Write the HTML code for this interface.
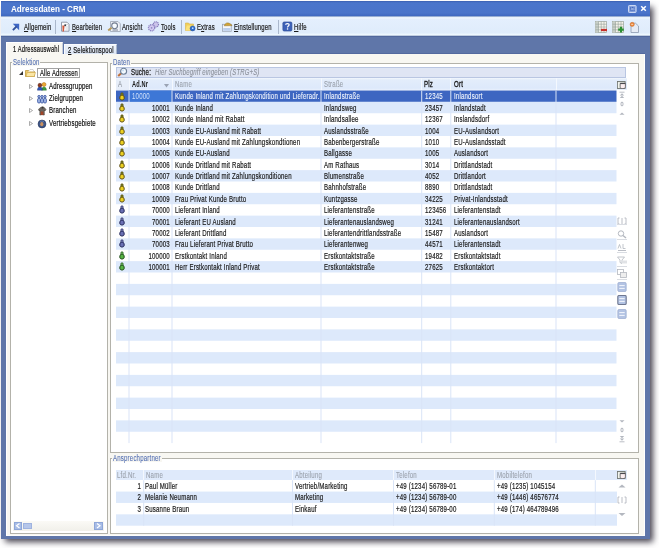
<!DOCTYPE html>
<html><head><meta charset="utf-8"><title>Adressdaten - CRM</title>
<style>
*{margin:0;padding:0;box-sizing:border-box}
html,body{width:659px;height:548px;overflow:hidden;background:#fff}
body{position:relative;font-family:"Liberation Sans",sans-serif;font-size:8px;color:#1c1c1c}
.a{position:absolute}
.t{position:absolute;white-space:nowrap;line-height:10px;height:10px;font-size:8.5px;transform-origin:0 50%;letter-spacing:.25px;-webkit-text-stroke:.2px currentColor}
u{text-decoration:underline;text-decoration-thickness:.6px;text-underline-offset:.5px}
</style></head><body>
<div class="a" style="left:5px;top:7px;width:647.8px;height:534.5px;background:rgba(25,20,35,.8);filter:blur(3px)"></div>
<div class="a" style="left:1px;top:1px;width:649px;height:538px;background:#5f76a9"></div>
<div class="a" style="left:1px;top:1px;width:649px;height:15px;background:linear-gradient(#3a5fb0,#4a75cb 12%,#4a74ca 80%,#3f68bf)"></div>
<div class="t" style="left:10.5px;top:4.1px;transform:scaleX(0.95);color:#fff;font-weight:bold;-webkit-text-stroke:0;letter-spacing:0">Adressdaten - CRM</div>
<svg class="a" style="left:628px;top:5px" width="9" height="8" viewBox="0 0 9 8"><rect x="0.5" y="0.5" width="7.6" height="7" rx=".8" fill="#8ea8e0" stroke="#d5e0f7" stroke-width=".9"/><rect x="2.4" y="2.4" width="3.8" height="3.3" fill="none" stroke="#2f57b0" stroke-width=".9" stroke-dasharray="1 .6"/></svg>
<svg class="a" style="left:640px;top:5px" width="7" height="7" viewBox="0 0 7 7"><path d="M1.2 1.2L5.8 5.8M5.8 1.2L1.2 5.8" stroke="#fff" stroke-width="1.5"/></svg>
<div class="a" style="left:1px;top:16px;width:649px;height:20px;background:linear-gradient(#6f8cc0,#f2f9ff 8%,#e4effd 16%,#dfecfb 84%,#eef8ff 93%,#a7b5cf)"></div>
<div class="a" style="left:1px;top:36px;width:649px;height:1px;background:#50679c"></div>
<div class="a" style="left:6px;top:53px;width:639px;height:1px;background:#53699f"></div>
<svg class="a" style="left:9px;top:19px" width="16" height="16" viewBox="0 0 16 16"><path d="M12.8 23.8L19.2 23.8L19.1 30.2z" transform="translate(-9,-19)" fill="#3d66c4"/><path d="M12.9 30.1L16.6 26.4" transform="translate(-9,-19)" stroke="#2f4f9a" stroke-width="1.9"/></svg>
<div class="t" style="left:23.5px;top:22.4px;transform:scaleX(0.694);-webkit-text-stroke:.22px currentColor"><u>A</u>llgemein</div>
<div class="a" style="left:55px;top:19.5px;width:1px;height:14px;background:#aab8cc"></div>
<svg class="a" style="left:58px;top:19px" width="16" height="16" viewBox="0 0 16 16"><g transform="translate(-58,-19)"><path d="M61.5 22.2h5.5l2 2v7h-7.5z" fill="#fbfcfe" stroke="#7d8798" stroke-width=".8"/><path d="M66 24.5h2M65.5 27h2.5M65.5 29h2.5" stroke="#b8c0cc" stroke-width=".6"/><path d="M62.3 25.5L64.6 25.5L63.9 31.6L62.6 31.6z" fill="#d35a3e"/><circle cx="65.2" cy="25.2" r="1" fill="#3a3f48"/></g></svg>
<div class="t" style="left:71.8px;top:22.4px;transform:scaleX(0.694);-webkit-text-stroke:.22px currentColor"><u>B</u>earbeiten</div>
<svg class="a" style="left:106px;top:19px" width="16" height="16" viewBox="0 0 16 16"><g transform="translate(-106,-19)"><path d="M110.5 21.5h7.5l2.3 2.3v7.7h-9.8z" fill="#eef1f7" stroke="#9aa3b3" stroke-width=".8"/><circle cx="114.6" cy="25.8" r="2.9" fill="#f6fbff" stroke="#727d90" stroke-width="1.1"/><path d="M108.2 30.6L111.6 27.8" stroke="#b79a5a" stroke-width="1.9"/><path d="M112.5 30h5.5" stroke="#6f7a8c" stroke-width=".9"/></g></svg>
<div class="t" style="left:121.7px;top:22.4px;transform:scaleX(0.694);-webkit-text-stroke:.22px currentColor">An<u>s</u>icht</div>
<svg class="a" style="left:146px;top:19px" width="16" height="16" viewBox="0 0 16 16"><g transform="translate(-146,-19)"><circle cx="155.9" cy="24.4" r="2.6" fill="#cbc4ea" stroke="#8278b8" stroke-width="1.2" stroke-dasharray="1 .7"/><circle cx="151.6" cy="27.8" r="3.1" fill="#d3ccf0" stroke="#8a80c0" stroke-width="1.3" stroke-dasharray="1.1 .7"/><circle cx="151.6" cy="27.8" r=".9" fill="#9088c4"/></g></svg>
<div class="t" style="left:160.7px;top:22.4px;transform:scaleX(0.694);-webkit-text-stroke:.22px currentColor"><u>T</u>ools</div>
<div class="a" style="left:181px;top:19.5px;width:1px;height:14px;background:#aab8cc"></div>
<svg class="a" style="left:183px;top:19px" width="16" height="16" viewBox="0 0 16 16"><g transform="translate(-183,-19)"><path d="M185.5 23h3l1 1h4v6.5h-8z" fill="#f0cf5a" stroke="#d9b24a" stroke-width=".6"/><path d="M185.6 30.5l1.2-5h7.4l-1 5z" fill="#fbe27a"/><circle cx="192.6" cy="28.4" r="2.5" fill="#2a68cc" stroke="#1d4f9e" stroke-width=".5"/><circle cx="192.7" cy="28.2" r=".9" fill="#bfe0ff"/></g></svg>
<div class="t" style="left:197.4px;top:22.4px;transform:scaleX(0.694);-webkit-text-stroke:.22px currentColor">E<u>x</u>tras</div>
<svg class="a" style="left:220px;top:19px" width="16" height="16" viewBox="0 0 16 16"><g transform="translate(-220,-19)"><rect x="222.4" y="24.3" width="8.8" height="7" fill="#f5f7fb" stroke="#9aa4b4" stroke-width=".8"/><rect x="223.2" y="28" width="7.2" height="2.8" fill="#bcd0ee"/><path d="M224.2 25.8C225.5 22.5 228 21.8 231.5 24.8L232 25.6z" fill="#d2a536" stroke="#8f6a1a" stroke-width=".5"/></g></svg>
<div class="t" style="left:234px;top:22.4px;transform:scaleX(0.694);-webkit-text-stroke:.22px currentColor"><u>E</u>instellungen</div>
<div class="a" style="left:277.5px;top:19.5px;width:1px;height:14px;background:#aab8cc"></div>
<svg class="a" style="left:280px;top:19px" width="16" height="16" viewBox="0 0 16 16"><g transform="translate(-280,-19)"><rect x="282.9" y="22" width="9" height="9" rx="1.2" fill="#3d62b8" stroke="#2c4d9a" stroke-width=".7"/><path d="M285.6 24.8c0-1.6 3.6-1.6 3.6 0c0 1.2-1.7 1.3-1.7 2.6" fill="none" stroke="#fff" stroke-width="1.2"/><rect x="286.9" y="28.3" width="1.3" height="1.3" fill="#fff"/></g></svg>
<div class="t" style="left:293.6px;top:22.4px;transform:scaleX(0.694);-webkit-text-stroke:.22px currentColor"><u>H</u>ilfe</div>
<svg class="a" style="left:595px;top:21.2px" width="12" height="12" viewBox="0 0 12 12"><rect x="0.5" y="0.5" width="11" height="11" fill="#f4f3ea" stroke="#9aa39a" stroke-width=".7"/><rect x="0.5" y="0.5" width="3" height="11" fill="#c8cfc8"/><path d="M0.5 3.2h11M0.5 6h11M0.5 8.8h11M3.5 0.5v11M6.2 0.5v11M9 0.5v11" stroke="#8f9a92" stroke-width=".55"/><path d="M6 9h6" stroke="#c8302a" stroke-width="2.2"/></svg>
<svg class="a" style="left:612px;top:21.2px" width="12" height="12" viewBox="0 0 12 12"><rect x="0.5" y="0.5" width="11" height="11" fill="#f4f3ea" stroke="#9aa39a" stroke-width=".7"/><rect x="0.5" y="0.5" width="3" height="11" fill="#c8cfc8"/><path d="M0.5 3.2h11M0.5 6h11M0.5 8.8h11M3.5 0.5v11M6.2 0.5v11M9 0.5v11" stroke="#8f9a92" stroke-width=".55"/><path d="M6.2 8.6h5.6M9 5.8v5.6" stroke="#2a8f33" stroke-width="2.2"/></svg>
<svg class="a" style="left:629px;top:21px" width="11" height="12" viewBox="0 0 11 12"><path d="M2 2.2h4.5l3 2.8v6.5h-7.5z" fill="#e6ecf6" stroke="#8d9ab0" stroke-width=".8"/><circle cx="3.2" cy="3.4" r="2.1" fill="#ee8a3c" stroke="#c65a1a" stroke-width=".4"/><path d="M2.2 3.4h2" stroke="#fff" stroke-width=".6"/></svg>
<div class="a" style="left:6px;top:42px;width:57px;height:13px;background:#f8f7f2;border-top:1px solid #fff;border-left:1px solid #fff;border-right:1px solid #c9cfd8"></div>
<div class="a" style="left:63.5px;top:44px;width:53.5px;height:10px;background:linear-gradient(#f0f5fc,#dce6f6);border-top:1px solid #fafcff;border-left:1px solid #fafcff;border-right:1px solid #a9b6cc"></div>
<div class="a" style="left:6px;top:54px;width:639px;height:482px;background:#f8f7f2;border-left:1px solid #fff;border-right:1px solid #fff;border-bottom:1px solid #fdfdfb"></div>
<div class="t" style="left:12.5px;top:43.6px;transform:scaleX(0.678);color:#111">1 Adressauswahl</div>
<div class="t" style="left:67.6px;top:44.5px;transform:scaleX(0.688);color:#111"><u>2</u> Selektionspool</div>
<div class="a" style="left:10px;top:62px;width:98px;height:471.5px;background:#fff;border:1px solid #b3b2aa"></div>
<div class="a" style="left:12px;top:58px;width:28px;height:8px;background:#f8f7f2"></div>
<div class="t" style="left:13px;top:56.9px;transform:scaleX(0.717);color:#5570b2;-webkit-text-stroke:.1px currentColor">Selektion</div>
<svg class="a" style="left:18.7px;top:71.2px" width="4" height="4" viewBox="0 0 4 4"><path d="M4 0V4H0z" fill="#333"/></svg>
<svg class="a" style="left:25px;top:68.5px" width="11" height="8" viewBox="0 0 11 8"><path d="M0.5 1.5h3.5l1 1h4.5v5h-9z" fill="#eec867" stroke="#bf9a3c" stroke-width=".8"/><path d="M1 7.5l1.3-4h8.2l-1.3 4z" fill="#fbe6a4" stroke="#c9a44a" stroke-width=".6"/><path d="M3 2.5l2-2h3l1 2" fill="#fff" stroke="#aaa" stroke-width=".5"/></svg>
<div class="a" style="left:37.3px;top:68px;width:42.5px;height:9.5px;border:1px solid #a3a3a3;background:#fff"></div>
<div class="t" style="left:39.5px;top:67.7px;transform:scaleX(0.688);color:#111">Alle Adressen</div>
<svg class="a" style="left:28.5px;top:83.6px" width="4" height="5" viewBox="0 0 4 5"><path d="M0.5 0.5L3.5 2.5L0.5 4.5z" fill="none" stroke="#888" stroke-width=".7"/></svg>
<svg class="a" style="left:36.5px;top:81.3px" width="10" height="10" viewBox="0 0 10 10"><path d="M4.6 9.2c0-4.4 4.8-4.4 4.8 0z" fill="#3b9b3c" stroke="#2a6a2a" stroke-width=".4"/><circle cx="7" cy="3.5" r="2" fill="#eeaa33" stroke="#a86a10" stroke-width=".5"/><path d="M0.4 9.2c0-4.6 5-4.6 5 0z" fill="#3458b8" stroke="#223d80" stroke-width=".4"/><circle cx="2.9" cy="4.2" r="1.9" fill="#8a3c22" stroke="#5a2010" stroke-width=".5"/></svg>
<div class="t" style="left:49px;top:80.7px;transform:scaleX(0.717);color:#111">Adressgruppen</div>
<svg class="a" style="left:28.5px;top:95.89999999999999px" width="4" height="5" viewBox="0 0 4 5"><path d="M0.5 0.5L3.5 2.5L0.5 4.5z" fill="none" stroke="#888" stroke-width=".7"/></svg>
<svg class="a" style="left:36.5px;top:93.6px" width="10" height="10" viewBox="0 0 10 10"><g fill="#9fb4e4" stroke="#34519e" stroke-width=".8"><circle cx="2" cy="2.6" r="1.2"/><circle cx="5" cy="2.6" r="1.2"/><circle cx="8" cy="2.6" r="1.2"/><rect x="0.6" y="4.4" width="2.8" height="4.6" rx="1.2"/><rect x="3.6" y="4.4" width="2.8" height="4.6" rx="1.2"/><rect x="6.6" y="4.4" width="2.8" height="4.6" rx="1.2"/></g></svg>
<div class="t" style="left:49px;top:93.0px;transform:scaleX(0.717);color:#111">Zielgruppen</div>
<svg class="a" style="left:28.5px;top:108.3px" width="4" height="5" viewBox="0 0 4 5"><path d="M0.5 0.5L3.5 2.5L0.5 4.5z" fill="none" stroke="#888" stroke-width=".7"/></svg>
<svg class="a" style="left:36.5px;top:106.0px" width="10" height="10" viewBox="0 0 10 10"><path d="M1.5 3.2L4 1.2h3l2 2.2L8 5L7.3 4.2V9H5.5L5 6L4.5 9H2.8V4.2L2.2 5z" fill="#6a6560" stroke="#3a3530" stroke-width=".5"/><path d="M4.3 5.5v3.5M5.8 5.5v3.5" stroke="#b0401e" stroke-width="1.1"/><circle cx="5.5" cy="1.6" r="1" fill="#3a3530"/></svg>
<div class="t" style="left:49px;top:105.4px;transform:scaleX(0.717);color:#111">Branchen</div>
<svg class="a" style="left:28.5px;top:120.8px" width="4" height="5" viewBox="0 0 4 5"><path d="M0.5 0.5L3.5 2.5L0.5 4.5z" fill="none" stroke="#888" stroke-width=".7"/></svg>
<svg class="a" style="left:36.5px;top:118.5px" width="10" height="10" viewBox="0 0 10 10"><circle cx="5" cy="5" r="3.9" fill="#3f5788" stroke="#24335a" stroke-width=".7"/><ellipse cx="4.8" cy="5.2" rx="1.6" ry="2.1" fill="#c89060"/><path d="M3 2.5c1-.8 3-.8 4 .2" stroke="#8aa0d0" stroke-width=".5" fill="none"/></svg>
<div class="t" style="left:49px;top:117.9px;transform:scaleX(0.717);color:#111">Vertriebsgebiete</div>
<div class="a" style="left:13px;top:520.5px;width:91px;height:10px;background:linear-gradient(#fbfaf6,#f1f0ea)"></div>
<div class="a" style="left:14px;top:522px;width:8px;height:7.5px;background:#a8bde6;border:1px solid #8ea6d8"></div>
<svg class="a" style="left:14px;top:522px" width="8" height="7.5" viewBox="0 0 8 7.5"><path d="M5.5 1.5L2.5 3.8L5.5 6" fill="none" stroke="#fff" stroke-width="1.2"/></svg>
<div class="a" style="left:23px;top:522.5px;width:8.5px;height:6.5px;background:#b5c6ea;border:1px solid #9fb3df"></div>
<div class="a" style="left:94px;top:522px;width:8.5px;height:7.5px;background:#a8bde6;border:1px solid #8ea6d8"></div>
<svg class="a" style="left:94px;top:522px" width="8.5" height="7.5" viewBox="0 0 8.5 7.5"><path d="M3 1.5L6 3.8L3 6" fill="none" stroke="#fff" stroke-width="1.2"/></svg>
<div class="a" style="left:110.4px;top:63px;width:528.6px;height:389.6px;background:#fff;border:1px solid #b3b2aa"></div>
<div class="a" style="left:112px;top:58px;width:19px;height:8px;background:#f8f7f2"></div>
<div class="t" style="left:113px;top:57.1px;transform:scaleX(0.717);color:#5570b2;-webkit-text-stroke:.1px currentColor">Daten</div>
<div class="a" style="left:116px;top:66.6px;width:510px;height:11px;background:#dfe5f4;border:1px solid #b9c6e2"></div>
<svg class="a" style="left:116.5px;top:67.2px" width="11" height="10" viewBox="0 0 11 10"><path d="M1.2 9L4.2 6.2" stroke="#c0703a" stroke-width="2"/><circle cx="6.6" cy="4.3" r="3" fill="#f4faff" stroke="#6d7f96" stroke-width="1.1"/><circle cx="6" cy="3.6" r="1" fill="#c8e0f4"/></svg>
<div class="t" style="left:130.5px;top:67.1px;transform:scaleX(0.717);color:#222;-webkit-text-stroke:.3px currentColor">Suche:</div>
<div class="t" style="left:155px;top:67.1px;transform:scaleX(0.701);color:#8a8f99;font-style:italic;-webkit-text-stroke:.1px currentColor">Hier Suchbegriff eingeben (STRG+S)</div>
<div class="a" style="left:116px;top:78.2px;width:510.5px;height:12.3px;background:linear-gradient(#f3f7fd,#e3edfb 15%,#dde9fb 85%,#e9f0fc)"></div>
<div class="a" style="left:116px;top:78.2px;width:12.5px;height:12.3px;background:linear-gradient(#f3f7fd,#e8eff9 15%,#e6edf9)"></div>
<div class="a" style="left:128.5px;top:78.2px;width:1px;height:12.3px;background:#f4f8fe"></div>
<div class="a" style="left:171.5px;top:78.2px;width:1px;height:12.3px;background:#f4f8fe"></div>
<div class="a" style="left:320.5px;top:78.2px;width:1px;height:12.3px;background:#f4f8fe"></div>
<div class="a" style="left:421.2px;top:78.2px;width:1px;height:12.3px;background:#f4f8fe"></div>
<div class="a" style="left:450.3px;top:78.2px;width:1px;height:12.3px;background:#f4f8fe"></div>
<div class="a" style="left:555.5px;top:78.2px;width:1px;height:12.3px;background:#f4f8fe"></div>
<div class="t" style="left:117.8px;top:79.4px;transform:scaleX(0.717);color:#959ca6;-webkit-text-stroke:.1px currentColor">A</div>
<div class="t" style="left:132px;top:79.4px;transform:scaleX(0.66);color:#1a1a1a;font-weight:bold;-webkit-text-stroke:0">Ad.Nr</div>
<svg class="a" style="left:163.5px;top:83.5px" width="5" height="4" viewBox="0 0 5 4"><path d="M0 0h5l-2.5 3.5z" fill="#9aa3b3"/></svg>
<div class="t" style="left:175px;top:79.4px;transform:scaleX(0.717);color:#9aa1ab;-webkit-text-stroke:.1px currentColor">Name</div>
<div class="t" style="left:324px;top:79.4px;transform:scaleX(0.717);color:#9aa1ab;-webkit-text-stroke:.1px currentColor">Straße</div>
<div class="t" style="left:424.3px;top:79.4px;transform:scaleX(0.717);color:#1a1a1a;-webkit-text-stroke:.35px currentColor">Plz</div>
<div class="t" style="left:453.5px;top:79.4px;transform:scaleX(0.717);color:#1a1a1a;-webkit-text-stroke:.35px currentColor">Ort</div>
<svg class="a" style="left:617px;top:80.8px" width="9" height="8" viewBox="0 0 9 8"><rect x="0.5" y="0.5" width="7.6" height="7" fill="#e4e8e0" stroke="#6f7470" stroke-width=".9"/><path d="M1.4 1.4v5.4" stroke="#f4f6f0" stroke-width="1"/><path d="M3.2 2.6h5.2v3.2c0 1.2-.8 1.8-2.6 1.8S3.2 7 3.2 5.8z" fill="#fbeef0" stroke="#5a5a60" stroke-width=".8"/><path d="M3.2 2.4h5.2" stroke="#4a4a50" stroke-width="1.2"/></svg>
<svg class="a" style="left:0;top:0" width="659" height="548">
<rect x="116" y="90.5" width="500.5" height="11.375" fill="#3d66c1"/>
<rect x="129" y="90.5" width="42.5" height="11.375" fill="#3d77d6"/>
<rect x="116" y="101.875" width="500.5" height="11.375" fill="#dde9fb"/>
<rect x="116" y="124.625" width="500.5" height="11.375" fill="#dde9fb"/>
<rect x="116" y="147.375" width="500.5" height="11.375" fill="#dde9fb"/>
<rect x="116" y="170.125" width="500.5" height="11.375" fill="#dde9fb"/>
<rect x="116" y="192.875" width="500.5" height="11.375" fill="#dde9fb"/>
<rect x="116" y="215.625" width="500.5" height="11.375" fill="#dde9fb"/>
<rect x="116" y="238.375" width="500.5" height="11.375" fill="#dde9fb"/>
<rect x="116" y="261.125" width="500.5" height="11.375" fill="#dde9fb"/>
<rect x="116" y="283.875" width="500.5" height="11.375" fill="#dde9fb"/>
<rect x="116" y="306.625" width="500.5" height="11.375" fill="#dde9fb"/>
<rect x="116" y="329.375" width="500.5" height="11.375" fill="#dde9fb"/>
<rect x="116" y="352.125" width="500.5" height="11.375" fill="#dde9fb"/>
<rect x="116" y="374.875" width="500.5" height="11.375" fill="#dde9fb"/>
<rect x="116" y="397.625" width="500.5" height="11.375" fill="#dde9fb"/>
<rect x="116" y="420.375" width="500.5" height="11.375" fill="#dde9fb"/>
<rect x="128.5" y="90.5" width="1" height="352.625" fill="#d9e4f7"/>
<rect x="171.5" y="90.5" width="1" height="352.625" fill="#d9e4f7"/>
<rect x="320.5" y="90.5" width="1" height="352.625" fill="#d9e4f7"/>
<rect x="421.2" y="90.5" width="1" height="352.625" fill="#d9e4f7"/>
<rect x="450.3" y="90.5" width="1" height="352.625" fill="#d9e4f7"/>
<rect x="555.5" y="90.5" width="1" height="352.625" fill="#d9e4f7"/>
</svg>
<svg class="a" style="left:118.6px;top:91.5px" width="6" height="9" viewBox="0 0 6 9"><path d="M3 2.8C1.5 2.8 0.8 4.6 0.8 6C0.8 7.3 1.5 8 3 8C4.5 8 5.2 7.3 5.2 6C5.2 4.6 4.5 2.8 3 2.8z" fill="#ecd020" stroke="#5a4a10" stroke-width="1"/><circle cx="3" cy="2.1" r="1.25" fill="#7a8a2a" stroke="#5a4a10" stroke-width=".7"/></svg>
<div class="t" style="left:132px;top:91.39px;transform:scaleX(0.717);color:#cfe0fb;-webkit-text-stroke:0">10000</div>
<div class="t" style="left:175px;top:91.39px;transform:scaleX(0.717);color:#f2f6fd;-webkit-text-stroke:.1px currentColor">Kunde Inland mit Zahlungskondition und Lieferadr.</div>
<div class="t" style="left:324px;top:91.39px;transform:scaleX(0.717);color:#f2f6fd;-webkit-text-stroke:.1px currentColor">Inlandstraße</div>
<div class="t" style="left:424.5px;top:91.39px;transform:scaleX(0.717);color:#f2f6fd;-webkit-text-stroke:.1px currentColor">12345</div>
<div class="t" style="left:453.5px;top:91.39px;transform:scaleX(0.717);color:#f2f6fd;-webkit-text-stroke:.1px currentColor">Inlandsort</div>
<svg class="a" style="left:118.6px;top:102.88px" width="6" height="9" viewBox="0 0 6 9"><path d="M3 2.8C1.5 2.8 0.8 4.6 0.8 6C0.8 7.3 1.5 8 3 8C4.5 8 5.2 7.3 5.2 6C5.2 4.6 4.5 2.8 3 2.8z" fill="#ecd020" stroke="#5a4a10" stroke-width="1"/><circle cx="3" cy="2.1" r="1.25" fill="#7a8a2a" stroke="#5a4a10" stroke-width=".7"/></svg>
<div class="t" style="right:489.5px;top:102.76px;transform-origin:100% 50%;transform:scaleX(0.717);color:#1c1c1c">10001</div>
<div class="t" style="left:175px;top:102.76px;transform:scaleX(0.717);color:#1c1c1c">Kunde Inland</div>
<div class="t" style="left:324px;top:102.76px;transform:scaleX(0.717);color:#1c1c1c">Inlandsweg</div>
<div class="t" style="left:424.5px;top:102.76px;transform:scaleX(0.717);color:#1c1c1c">23457</div>
<div class="t" style="left:453.5px;top:102.76px;transform:scaleX(0.717);color:#1c1c1c">Inlandstadt</div>
<svg class="a" style="left:118.6px;top:114.25px" width="6" height="9" viewBox="0 0 6 9"><path d="M3 2.8C1.5 2.8 0.8 4.6 0.8 6C0.8 7.3 1.5 8 3 8C4.5 8 5.2 7.3 5.2 6C5.2 4.6 4.5 2.8 3 2.8z" fill="#ecd020" stroke="#5a4a10" stroke-width="1"/><circle cx="3" cy="2.1" r="1.25" fill="#7a8a2a" stroke="#5a4a10" stroke-width=".7"/></svg>
<div class="t" style="right:489.5px;top:114.14px;transform-origin:100% 50%;transform:scaleX(0.717);color:#1c1c1c">10002</div>
<div class="t" style="left:175px;top:114.14px;transform:scaleX(0.717);color:#1c1c1c">Kunde Inland mit Rabatt</div>
<div class="t" style="left:324px;top:114.14px;transform:scaleX(0.717);color:#1c1c1c">Inlandsallee</div>
<div class="t" style="left:424.5px;top:114.14px;transform:scaleX(0.717);color:#1c1c1c">12367</div>
<div class="t" style="left:453.5px;top:114.14px;transform:scaleX(0.717);color:#1c1c1c">Inslandsdorf</div>
<svg class="a" style="left:118.6px;top:125.62px" width="6" height="9" viewBox="0 0 6 9"><path d="M3 2.8C1.5 2.8 0.8 4.6 0.8 6C0.8 7.3 1.5 8 3 8C4.5 8 5.2 7.3 5.2 6C5.2 4.6 4.5 2.8 3 2.8z" fill="#ecd020" stroke="#5a4a10" stroke-width="1"/><circle cx="3" cy="2.1" r="1.25" fill="#7a8a2a" stroke="#5a4a10" stroke-width=".7"/></svg>
<div class="t" style="right:489.5px;top:125.51px;transform-origin:100% 50%;transform:scaleX(0.717);color:#1c1c1c">10003</div>
<div class="t" style="left:175px;top:125.51px;transform:scaleX(0.717);color:#1c1c1c">Kunde EU-Ausland mit Rabatt</div>
<div class="t" style="left:324px;top:125.51px;transform:scaleX(0.717);color:#1c1c1c">Auslandsstraße</div>
<div class="t" style="left:424.5px;top:125.51px;transform:scaleX(0.717);color:#1c1c1c">1004</div>
<div class="t" style="left:453.5px;top:125.51px;transform:scaleX(0.717);color:#1c1c1c">EU-Auslandsort</div>
<svg class="a" style="left:118.6px;top:137.0px" width="6" height="9" viewBox="0 0 6 9"><path d="M3 2.8C1.5 2.8 0.8 4.6 0.8 6C0.8 7.3 1.5 8 3 8C4.5 8 5.2 7.3 5.2 6C5.2 4.6 4.5 2.8 3 2.8z" fill="#ecd020" stroke="#5a4a10" stroke-width="1"/><circle cx="3" cy="2.1" r="1.25" fill="#7a8a2a" stroke="#5a4a10" stroke-width=".7"/></svg>
<div class="t" style="right:489.5px;top:136.89px;transform-origin:100% 50%;transform:scaleX(0.717);color:#1c1c1c">10004</div>
<div class="t" style="left:175px;top:136.89px;transform:scaleX(0.717);color:#1c1c1c">Kunde EU-Ausland mit Zahlungskondtionen</div>
<div class="t" style="left:324px;top:136.89px;transform:scaleX(0.717);color:#1c1c1c">Babenbergerstraße</div>
<div class="t" style="left:424.5px;top:136.89px;transform:scaleX(0.717);color:#1c1c1c">1010</div>
<div class="t" style="left:453.5px;top:136.89px;transform:scaleX(0.717);color:#1c1c1c">EU-Auslandsstadt</div>
<svg class="a" style="left:118.6px;top:148.38px" width="6" height="9" viewBox="0 0 6 9"><path d="M3 2.8C1.5 2.8 0.8 4.6 0.8 6C0.8 7.3 1.5 8 3 8C4.5 8 5.2 7.3 5.2 6C5.2 4.6 4.5 2.8 3 2.8z" fill="#ecd020" stroke="#5a4a10" stroke-width="1"/><circle cx="3" cy="2.1" r="1.25" fill="#7a8a2a" stroke="#5a4a10" stroke-width=".7"/></svg>
<div class="t" style="right:489.5px;top:148.26px;transform-origin:100% 50%;transform:scaleX(0.717);color:#1c1c1c">10005</div>
<div class="t" style="left:175px;top:148.26px;transform:scaleX(0.717);color:#1c1c1c">Kunde EU-Ausland</div>
<div class="t" style="left:324px;top:148.26px;transform:scaleX(0.717);color:#1c1c1c">Ballgasse</div>
<div class="t" style="left:424.5px;top:148.26px;transform:scaleX(0.717);color:#1c1c1c">1005</div>
<div class="t" style="left:453.5px;top:148.26px;transform:scaleX(0.717);color:#1c1c1c">Auslandsort</div>
<svg class="a" style="left:118.6px;top:159.75px" width="6" height="9" viewBox="0 0 6 9"><path d="M3 2.8C1.5 2.8 0.8 4.6 0.8 6C0.8 7.3 1.5 8 3 8C4.5 8 5.2 7.3 5.2 6C5.2 4.6 4.5 2.8 3 2.8z" fill="#ecd020" stroke="#5a4a10" stroke-width="1"/><circle cx="3" cy="2.1" r="1.25" fill="#7a8a2a" stroke="#5a4a10" stroke-width=".7"/></svg>
<div class="t" style="right:489.5px;top:159.64px;transform-origin:100% 50%;transform:scaleX(0.717);color:#1c1c1c">10006</div>
<div class="t" style="left:175px;top:159.64px;transform:scaleX(0.717);color:#1c1c1c">Kunde Drittland mit Rabatt</div>
<div class="t" style="left:324px;top:159.64px;transform:scaleX(0.717);color:#1c1c1c">Am Rathaus</div>
<div class="t" style="left:424.5px;top:159.64px;transform:scaleX(0.717);color:#1c1c1c">3014</div>
<div class="t" style="left:453.5px;top:159.64px;transform:scaleX(0.717);color:#1c1c1c">Drittlandstadt</div>
<svg class="a" style="left:118.6px;top:171.12px" width="6" height="9" viewBox="0 0 6 9"><path d="M3 2.8C1.5 2.8 0.8 4.6 0.8 6C0.8 7.3 1.5 8 3 8C4.5 8 5.2 7.3 5.2 6C5.2 4.6 4.5 2.8 3 2.8z" fill="#ecd020" stroke="#5a4a10" stroke-width="1"/><circle cx="3" cy="2.1" r="1.25" fill="#7a8a2a" stroke="#5a4a10" stroke-width=".7"/></svg>
<div class="t" style="right:489.5px;top:171.01px;transform-origin:100% 50%;transform:scaleX(0.717);color:#1c1c1c">10007</div>
<div class="t" style="left:175px;top:171.01px;transform:scaleX(0.717);color:#1c1c1c">Kunde Drittland mit Zahlungskonditionen</div>
<div class="t" style="left:324px;top:171.01px;transform:scaleX(0.717);color:#1c1c1c">Blumenstraße</div>
<div class="t" style="left:424.5px;top:171.01px;transform:scaleX(0.717);color:#1c1c1c">4052</div>
<div class="t" style="left:453.5px;top:171.01px;transform:scaleX(0.717);color:#1c1c1c">Drittlandort</div>
<svg class="a" style="left:118.6px;top:182.5px" width="6" height="9" viewBox="0 0 6 9"><path d="M3 2.8C1.5 2.8 0.8 4.6 0.8 6C0.8 7.3 1.5 8 3 8C4.5 8 5.2 7.3 5.2 6C5.2 4.6 4.5 2.8 3 2.8z" fill="#ecd020" stroke="#5a4a10" stroke-width="1"/><circle cx="3" cy="2.1" r="1.25" fill="#7a8a2a" stroke="#5a4a10" stroke-width=".7"/></svg>
<div class="t" style="right:489.5px;top:182.39px;transform-origin:100% 50%;transform:scaleX(0.717);color:#1c1c1c">10008</div>
<div class="t" style="left:175px;top:182.39px;transform:scaleX(0.717);color:#1c1c1c">Kunde Drittland</div>
<div class="t" style="left:324px;top:182.39px;transform:scaleX(0.717);color:#1c1c1c">Bahnhofstraße</div>
<div class="t" style="left:424.5px;top:182.39px;transform:scaleX(0.717);color:#1c1c1c">8890</div>
<div class="t" style="left:453.5px;top:182.39px;transform:scaleX(0.717);color:#1c1c1c">Drittlandstadt</div>
<svg class="a" style="left:118.6px;top:193.88px" width="6" height="9" viewBox="0 0 6 9"><path d="M3 2.8C1.5 2.8 0.8 4.6 0.8 6C0.8 7.3 1.5 8 3 8C4.5 8 5.2 7.3 5.2 6C5.2 4.6 4.5 2.8 3 2.8z" fill="#ecd020" stroke="#5a4a10" stroke-width="1"/><circle cx="3" cy="2.1" r="1.25" fill="#7a8a2a" stroke="#5a4a10" stroke-width=".7"/></svg>
<div class="t" style="right:489.5px;top:193.76px;transform-origin:100% 50%;transform:scaleX(0.717);color:#1c1c1c">10009</div>
<div class="t" style="left:175px;top:193.76px;transform:scaleX(0.717);color:#1c1c1c">Frau Privat Kunde Brutto</div>
<div class="t" style="left:324px;top:193.76px;transform:scaleX(0.717);color:#1c1c1c">Kuntzgasse</div>
<div class="t" style="left:424.5px;top:193.76px;transform:scaleX(0.717);color:#1c1c1c">34225</div>
<div class="t" style="left:453.5px;top:193.76px;transform:scaleX(0.717);color:#1c1c1c">Privat-Inlandsstadt</div>
<svg class="a" style="left:118.6px;top:205.25px" width="6" height="9" viewBox="0 0 6 9"><path d="M3 2.8C1.5 2.8 0.8 4.6 0.8 6C0.8 7.3 1.5 8 3 8C4.5 8 5.2 7.3 5.2 6C5.2 4.6 4.5 2.8 3 2.8z" fill="#6a70b4" stroke="#23275a" stroke-width="1"/><circle cx="3" cy="2.1" r="1.25" fill="#8a90c8" stroke="#23275a" stroke-width=".7"/></svg>
<div class="t" style="right:489.5px;top:205.14px;transform-origin:100% 50%;transform:scaleX(0.717);color:#1c1c1c">70000</div>
<div class="t" style="left:175px;top:205.14px;transform:scaleX(0.717);color:#1c1c1c">Lieferant Inland</div>
<div class="t" style="left:324px;top:205.14px;transform:scaleX(0.717);color:#1c1c1c">Lieferantenstraße</div>
<div class="t" style="left:424.5px;top:205.14px;transform:scaleX(0.717);color:#1c1c1c">123456</div>
<div class="t" style="left:453.5px;top:205.14px;transform:scaleX(0.717);color:#1c1c1c">Lieferantenstadt</div>
<svg class="a" style="left:118.6px;top:216.62px" width="6" height="9" viewBox="0 0 6 9"><path d="M3 2.8C1.5 2.8 0.8 4.6 0.8 6C0.8 7.3 1.5 8 3 8C4.5 8 5.2 7.3 5.2 6C5.2 4.6 4.5 2.8 3 2.8z" fill="#6a70b4" stroke="#23275a" stroke-width="1"/><circle cx="3" cy="2.1" r="1.25" fill="#8a90c8" stroke="#23275a" stroke-width=".7"/></svg>
<div class="t" style="right:489.5px;top:216.51px;transform-origin:100% 50%;transform:scaleX(0.717);color:#1c1c1c">70001</div>
<div class="t" style="left:175px;top:216.51px;transform:scaleX(0.717);color:#1c1c1c">Lieferant EU Ausland</div>
<div class="t" style="left:324px;top:216.51px;transform:scaleX(0.717);color:#1c1c1c">Lieferantenauslandsweg</div>
<div class="t" style="left:424.5px;top:216.51px;transform:scaleX(0.717);color:#1c1c1c">31241</div>
<div class="t" style="left:453.5px;top:216.51px;transform:scaleX(0.717);color:#1c1c1c">Lieferantenauslandsort</div>
<svg class="a" style="left:118.6px;top:228.0px" width="6" height="9" viewBox="0 0 6 9"><path d="M3 2.8C1.5 2.8 0.8 4.6 0.8 6C0.8 7.3 1.5 8 3 8C4.5 8 5.2 7.3 5.2 6C5.2 4.6 4.5 2.8 3 2.8z" fill="#6a70b4" stroke="#23275a" stroke-width="1"/><circle cx="3" cy="2.1" r="1.25" fill="#8a90c8" stroke="#23275a" stroke-width=".7"/></svg>
<div class="t" style="right:489.5px;top:227.89px;transform-origin:100% 50%;transform:scaleX(0.717);color:#1c1c1c">70002</div>
<div class="t" style="left:175px;top:227.89px;transform:scaleX(0.717);color:#1c1c1c">Lieferant Drittland</div>
<div class="t" style="left:324px;top:227.89px;transform:scaleX(0.717);color:#1c1c1c">Lieferantendrittlandsstraße</div>
<div class="t" style="left:424.5px;top:227.89px;transform:scaleX(0.717);color:#1c1c1c">15487</div>
<div class="t" style="left:453.5px;top:227.89px;transform:scaleX(0.717);color:#1c1c1c">Auslandsort</div>
<svg class="a" style="left:118.6px;top:239.38px" width="6" height="9" viewBox="0 0 6 9"><path d="M3 2.8C1.5 2.8 0.8 4.6 0.8 6C0.8 7.3 1.5 8 3 8C4.5 8 5.2 7.3 5.2 6C5.2 4.6 4.5 2.8 3 2.8z" fill="#6a70b4" stroke="#23275a" stroke-width="1"/><circle cx="3" cy="2.1" r="1.25" fill="#8a90c8" stroke="#23275a" stroke-width=".7"/></svg>
<div class="t" style="right:489.5px;top:239.26px;transform-origin:100% 50%;transform:scaleX(0.717);color:#1c1c1c">70003</div>
<div class="t" style="left:175px;top:239.26px;transform:scaleX(0.717);color:#1c1c1c">Frau Lieferant Privat Brutto</div>
<div class="t" style="left:324px;top:239.26px;transform:scaleX(0.717);color:#1c1c1c">Lieferantenweg</div>
<div class="t" style="left:424.5px;top:239.26px;transform:scaleX(0.717);color:#1c1c1c">44571</div>
<div class="t" style="left:453.5px;top:239.26px;transform:scaleX(0.717);color:#1c1c1c">Lieferantenstadt</div>
<svg class="a" style="left:118.6px;top:250.75px" width="6" height="9" viewBox="0 0 6 9"><path d="M3 2.8C1.5 2.8 0.8 4.6 0.8 6C0.8 7.3 1.5 8 3 8C4.5 8 5.2 7.3 5.2 6C5.2 4.6 4.5 2.8 3 2.8z" fill="#56b444" stroke="#1e4a18" stroke-width="1"/><circle cx="3" cy="2.1" r="1.25" fill="#7acc6a" stroke="#1e4a18" stroke-width=".7"/></svg>
<div class="t" style="right:489.5px;top:250.64px;transform-origin:100% 50%;transform:scaleX(0.717);color:#1c1c1c">100000</div>
<div class="t" style="left:175px;top:250.64px;transform:scaleX(0.717);color:#1c1c1c">Erstkontakt Inland</div>
<div class="t" style="left:324px;top:250.64px;transform:scaleX(0.717);color:#1c1c1c">Erstkontaktstraße</div>
<div class="t" style="left:424.5px;top:250.64px;transform:scaleX(0.717);color:#1c1c1c">19482</div>
<div class="t" style="left:453.5px;top:250.64px;transform:scaleX(0.717);color:#1c1c1c">Erstkontaktstadt</div>
<svg class="a" style="left:118.6px;top:262.12px" width="6" height="9" viewBox="0 0 6 9"><path d="M3 2.8C1.5 2.8 0.8 4.6 0.8 6C0.8 7.3 1.5 8 3 8C4.5 8 5.2 7.3 5.2 6C5.2 4.6 4.5 2.8 3 2.8z" fill="#56b444" stroke="#1e4a18" stroke-width="1"/><circle cx="3" cy="2.1" r="1.25" fill="#7acc6a" stroke="#1e4a18" stroke-width=".7"/></svg>
<div class="t" style="right:489.5px;top:262.01px;transform-origin:100% 50%;transform:scaleX(0.717);color:#1c1c1c">100001</div>
<div class="t" style="left:175px;top:262.01px;transform:scaleX(0.717);color:#1c1c1c">Herr Erstkontakt Inland Privat</div>
<div class="t" style="left:324px;top:262.01px;transform:scaleX(0.717);color:#1c1c1c">Erstkontaktstraße</div>
<div class="t" style="left:424.5px;top:262.01px;transform:scaleX(0.717);color:#1c1c1c">27625</div>
<div class="t" style="left:453.5px;top:262.01px;transform:scaleX(0.717);color:#1c1c1c">Erstkontaktort</div>
<svg class="a" style="left:617px;top:91px" width="10" height="8" viewBox="0 0 10 8"><path d="M2.5 1.2h5" stroke="#b3b7bf" stroke-width=".9"/><path d="M2.8 4.4L5 2.2L7.2 4.4zM2.8 7L5 4.8L7.2 7z" fill="#b3b7bf"/></svg>
<svg class="a" style="left:617px;top:99.5px" width="10" height="8" viewBox="0 0 10 8"><path d="M2.8 3.6L5 1.4L7.2 3.6zM2.8 4.4L5 6.6L7.2 4.4z" fill="#b3b7bf"/></svg>
<svg class="a" style="left:617px;top:109px" width="10" height="8" viewBox="0 0 10 8"><path d="M2.5 5.8L5 3.4L7.5 5.8z" fill="#b3b7bf"/></svg>
<svg class="a" style="left:617px;top:417.5px" width="10" height="8" viewBox="0 0 10 8"><path d="M2.5 2.2L5 4.6L7.5 2.2z" fill="#b3b7bf"/></svg>
<svg class="a" style="left:617px;top:426px" width="10" height="8" viewBox="0 0 10 8"><path d="M2.8 3.6L5 1.4L7.2 3.6zM2.8 4.4L5 6.6L7.2 4.4z" fill="#b3b7bf"/></svg>
<svg class="a" style="left:617px;top:435px" width="10" height="8" viewBox="0 0 10 8"><path d="M2.8 1L5 3.2L7.2 1zM2.8 3.6L5 5.8L7.2 3.6z" fill="#b3b7bf"/><path d="M2.5 6.8h5" stroke="#b3b7bf" stroke-width=".9"/></svg>
<svg class="a" style="left:617px;top:217px" width="10" height="8" viewBox="0 0 10 8"><path d="M2.5 1h-1.5v6h1.5M7.5 1h1.5v6h-1.5M5 1v6" fill="none" stroke="#b3b7bf" stroke-width=".9"/></svg>
<svg class="a" style="left:617px;top:223.5px" width="10" height="1" viewBox="0 0 10 1"><rect width="10" height="1" fill="#d9dce2"/></svg>
<svg class="a" style="left:617px;top:230px" width="10" height="9" viewBox="0 0 10 9"><circle cx="4" cy="3.5" r="2.7" fill="none" stroke="#b3b7bf" stroke-width="1"/><path d="M6 5.5L9 8" stroke="#b3b7bf" stroke-width="1.4"/></svg>
<svg class="a" style="left:617px;top:239px" width="10" height="1" viewBox="0 0 10 1"><rect width="10" height="1" fill="#d9dce2"/></svg>
<svg class="a" style="left:617px;top:243px" width="10" height="8" viewBox="0 0 10 8"><path d="M1 5.5L2.5 1.5L4 5.5M6 1v4.5h2.5" fill="none" stroke="#b3b7bf" stroke-width=".8"/><path d="M1 7.5h8" stroke="#b3b7bf" stroke-width=".9"/></svg>
<svg class="a" style="left:617px;top:252px" width="10" height="1" viewBox="0 0 10 1"><rect width="10" height="1" fill="#d9dce2"/></svg>
<svg class="a" style="left:617px;top:256px" width="10" height="9" viewBox="0 0 10 9"><path d="M0.5 1h7L5 4v3.5L3 6.5V4z" fill="none" stroke="#b3b7bf" stroke-width=".8"/><path d="M7 4.5v3M9 4.5v3" stroke="#b3b7bf" stroke-width=".8"/></svg>
<svg class="a" style="left:617px;top:265.5px" width="10" height="1" viewBox="0 0 10 1"><rect width="10" height="1" fill="#d9dce2"/></svg>
<svg class="a" style="left:617px;top:269px" width="10" height="9" viewBox="0 0 10 9"><rect x="0.5" y="0.5" width="6" height="5" fill="#fff" stroke="#b3b7bf" stroke-width=".8"/><rect x="3.5" y="3.5" width="6" height="5" fill="#eee" stroke="#b3b7bf" stroke-width=".8"/></svg>
<svg class="a" style="left:617px;top:279px" width="10" height="1" viewBox="0 0 10 1"><rect width="10" height="1" fill="#d9dce2"/></svg>
<svg class="a" style="left:617px;top:282px" width="10" height="10" viewBox="0 0 10 10"><rect x="0.8" y="0.5" width="8.4" height="9" rx="1.2" fill="#b3c3e3" stroke="#9aaad0" stroke-width="0.7"/><path d="M2.3 3.6h5.4M2.3 6.4h5.4" stroke="#f4f7fd" stroke-width="1"/></svg>
<svg class="a" style="left:617px;top:295px" width="10" height="10" viewBox="0 0 10 10"><rect x="0.8" y="0.5" width="8.4" height="9" rx="1.2" fill="#b3c3e3" stroke="#6f7891" stroke-width="1.1"/><path d="M2.3 3.6h5.4M2.3 6.4h5.4" stroke="#f4f7fd" stroke-width="1"/></svg>
<svg class="a" style="left:617px;top:308.5px" width="10" height="10" viewBox="0 0 10 10"><rect x="0.8" y="0.5" width="8.4" height="9" rx="1.2" fill="#b3c3e3" stroke="#9aaad0" stroke-width="0.7"/><path d="M2.3 3.6h5.4M2.3 6.4h5.4" stroke="#f4f7fd" stroke-width="1"/></svg>
<div class="a" style="left:110.4px;top:458px;width:528.6px;height:75.6px;background:#fff;border:1px solid #b3b2aa"></div>
<div class="a" style="left:112px;top:453.5px;width:50px;height:8px;background:#f8f7f2"></div>
<div class="t" style="left:113px;top:452.9px;transform:scaleX(0.717);color:#5570b2;-webkit-text-stroke:.1px currentColor">Ansprechpartner</div>
<div class="a" style="left:116px;top:469.5px;width:510.5px;height:10.7px;background:#dfeafb"></div>
<div class="a" style="left:143.2px;top:469.5px;width:1px;height:10.7px;background:#f4f8fe"></div>
<div class="a" style="left:292px;top:469.5px;width:1px;height:10.7px;background:#f4f8fe"></div>
<div class="a" style="left:393px;top:469.5px;width:1px;height:10.7px;background:#f4f8fe"></div>
<div class="a" style="left:493.8px;top:469.5px;width:1px;height:10.7px;background:#f4f8fe"></div>
<div class="a" style="left:594.8px;top:469.5px;width:1px;height:10.7px;background:#f4f8fe"></div>
<div class="t" style="left:116.8px;top:469.9px;transform:scaleX(0.717);color:#9aa1ab;-webkit-text-stroke:.1px currentColor">Lfd.Nr.</div>
<div class="t" style="left:146px;top:469.9px;transform:scaleX(0.717);color:#9aa1ab;-webkit-text-stroke:.1px currentColor">Name</div>
<div class="t" style="left:295px;top:469.9px;transform:scaleX(0.717);color:#9aa1ab;-webkit-text-stroke:.1px currentColor">Abteilung</div>
<div class="t" style="left:396px;top:469.9px;transform:scaleX(0.717);color:#9aa1ab;-webkit-text-stroke:.1px currentColor">Telefon</div>
<div class="t" style="left:497px;top:469.9px;transform:scaleX(0.717);color:#9aa1ab;-webkit-text-stroke:.1px currentColor">Mobiltelefon</div>
<svg class="a" style="left:617px;top:470.8px" width="9" height="8" viewBox="0 0 9 8"><rect x="0.5" y="0.5" width="7.6" height="7" fill="#e4e8e0" stroke="#6f7470" stroke-width=".9"/><path d="M1.4 1.4v5.4" stroke="#f4f6f0" stroke-width="1"/><path d="M3.2 2.6h5.2v3.2c0 1.2-.8 1.8-2.6 1.8S3.2 7 3.2 5.8z" fill="#fbeef0" stroke="#5a5a60" stroke-width=".8"/><path d="M3.2 2.4h5.2" stroke="#4a4a50" stroke-width="1.2"/></svg>
<svg class="a" style="left:0;top:0" width="659" height="548">
<rect x="116" y="491.575" width="501" height="11.375" fill="#dde9fb"/>
<rect x="116" y="514.325" width="501" height="11.375" fill="#dde9fb"/>
<rect x="143.2" y="480.2" width="1" height="45.5" fill="#d9e4f7"/>
<rect x="292" y="480.2" width="1" height="45.5" fill="#d9e4f7"/>
<rect x="393" y="480.2" width="1" height="45.5" fill="#d9e4f7"/>
<rect x="493.8" y="480.2" width="1" height="45.5" fill="#d9e4f7"/>
<rect x="594.8" y="480.2" width="1" height="45.5" fill="#d9e4f7"/>
</svg>
<div class="t" style="right:518px;top:481.09px;transform-origin:100% 50%;transform:scaleX(0.717);color:#1c1c1c">1</div>
<div class="t" style="left:144.6px;top:481.09px;transform:scaleX(0.717);color:#1c1c1c">Paul Müller</div>
<div class="t" style="left:295px;top:481.09px;transform:scaleX(0.717);color:#1c1c1c">Vertrieb/Marketing</div>
<div class="t" style="left:396px;top:481.09px;transform:scaleX(0.717);color:#1c1c1c">+49 (1234) 56789-01</div>
<div class="t" style="left:497px;top:481.09px;transform:scaleX(0.717);color:#1c1c1c">+49 (1235) 1045154</div>
<div class="t" style="right:518px;top:492.46px;transform-origin:100% 50%;transform:scaleX(0.717);color:#1c1c1c">2</div>
<div class="t" style="left:144.6px;top:492.46px;transform:scaleX(0.717);color:#1c1c1c">Melanie Neumann</div>
<div class="t" style="left:295px;top:492.46px;transform:scaleX(0.717);color:#1c1c1c">Marketing</div>
<div class="t" style="left:396px;top:492.46px;transform:scaleX(0.717);color:#1c1c1c">+49 (1234) 56789-00</div>
<div class="t" style="left:497px;top:492.46px;transform:scaleX(0.717);color:#1c1c1c">+49 (1446) 46576774</div>
<div class="t" style="right:518px;top:503.84px;transform-origin:100% 50%;transform:scaleX(0.717);color:#1c1c1c">3</div>
<div class="t" style="left:144.6px;top:503.84px;transform:scaleX(0.717);color:#1c1c1c">Susanne Braun</div>
<div class="t" style="left:295px;top:503.84px;transform:scaleX(0.717);color:#1c1c1c">Einkauf</div>
<div class="t" style="left:396px;top:503.84px;transform:scaleX(0.717);color:#1c1c1c">+49 (1234) 56789-00</div>
<div class="t" style="left:497px;top:503.84px;transform:scaleX(0.717);color:#1c1c1c">+49 (174) 464789496</div>
<svg class="a" style="left:617px;top:481.5px" width="10" height="8" viewBox="0 0 10 8"><path d="M1.5 5.5L5 2.5L8.5 5.5z" fill="#b3b7bf"/></svg>
<svg class="a" style="left:617px;top:496px" width="10" height="8" viewBox="0 0 10 8"><path d="M2.5 1h-1.5v6h1.5M7.5 1h1.5v6h-1.5M5 1v6" fill="none" stroke="#b3b7bf" stroke-width=".9"/></svg>
<svg class="a" style="left:617px;top:511px" width="10" height="8" viewBox="0 0 10 8"><path d="M1.5 2L5 5L8.5 2z" fill="#b3b7bf"/></svg>
</body></html>
